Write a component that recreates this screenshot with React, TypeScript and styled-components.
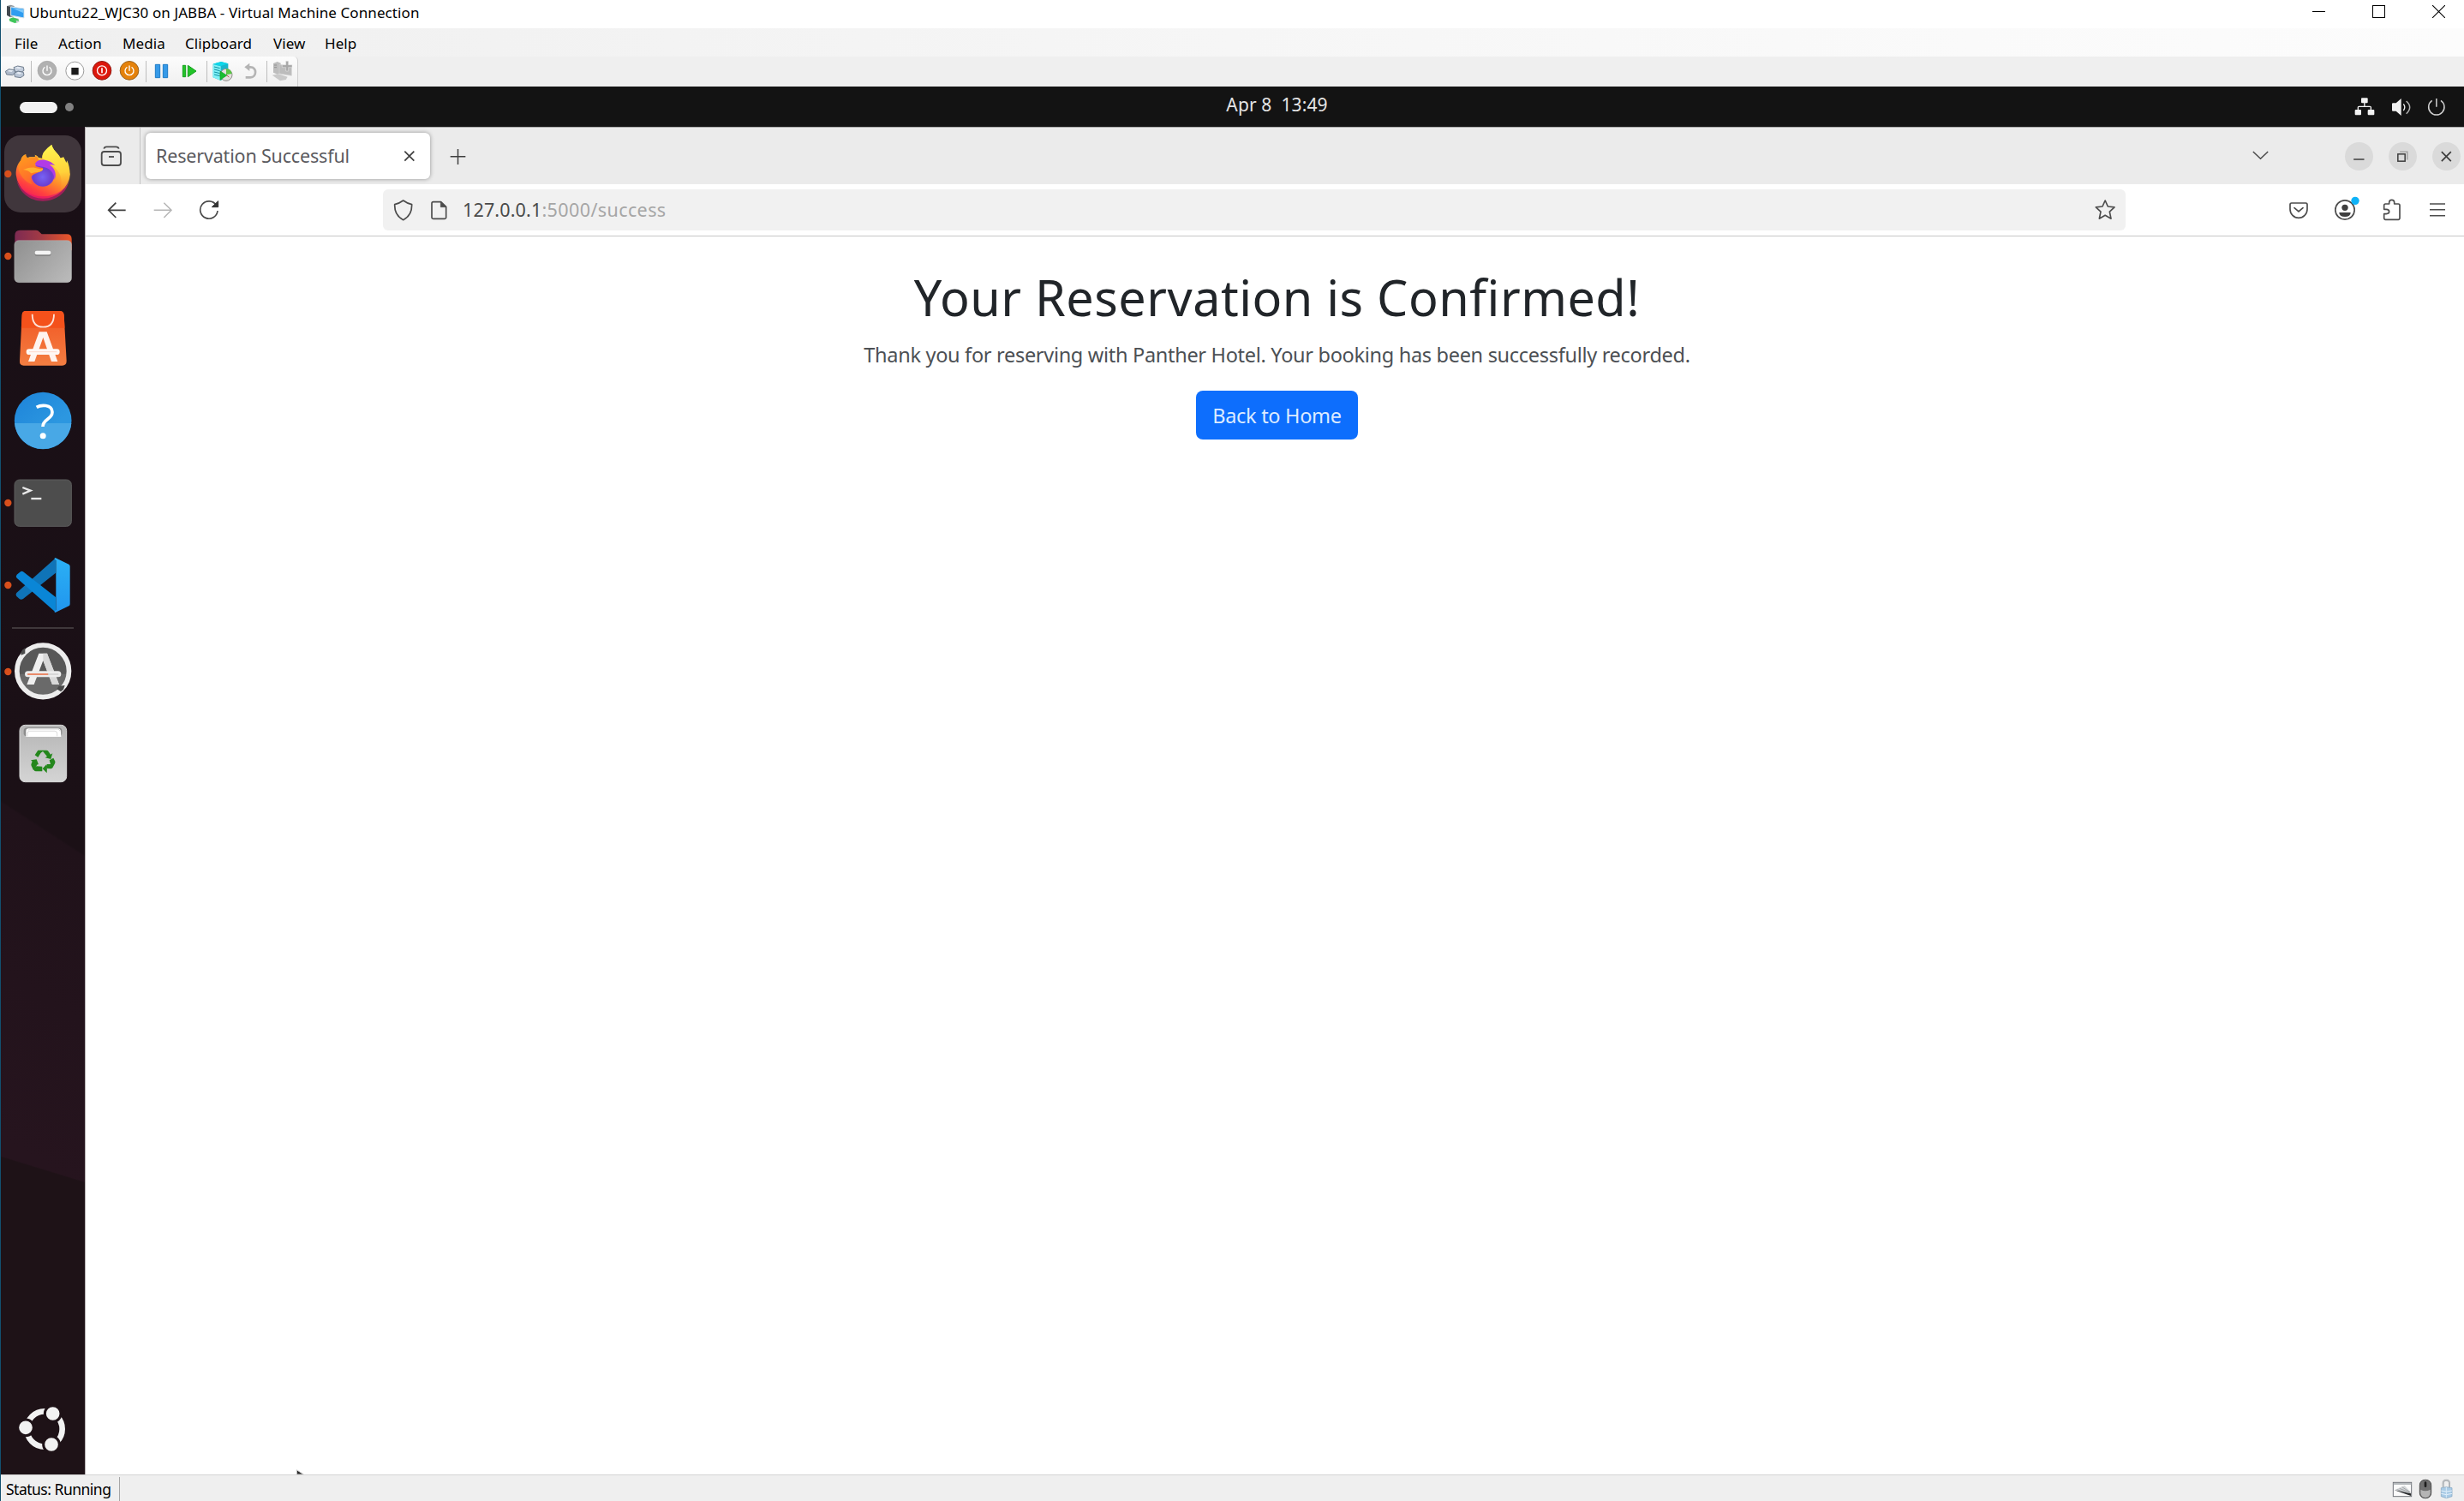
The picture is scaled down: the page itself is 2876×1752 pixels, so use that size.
import React from "react";
import styled, { createGlobalStyle } from "styled-components";

const GlobalStyle = createGlobalStyle`
  *, *::before, *::after { box-sizing: border-box; }
  html, body { margin: 0; padding: 0; background: #fff; }
  body { font-family: "Noto Sans", "Open Sans", sans-serif; overflow: hidden; }
  svg { display: block; flex: none; }
`;

/* ---------- text ---------- */
const Text = styled.span<{ $size: number; $spacing?: number; $color?: string }>`
  font-size: ${(p) => p.$size}px;
  letter-spacing: ${(p) => p.$spacing ?? 0}px;
  color: ${(p) => p.$color ?? "#000"};
  white-space: pre;
`;

/* ---------- host window ---------- */
const HostWindow = styled.div`
  width: 2876px;
  height: 1752px;
  display: flex;
  flex-direction: column;
  background: #fff;
  border-left: 1px solid #12506f;
  overflow: hidden;
`;

const TitleBar = styled.header`
  height: 33px;
  flex: none;
  display: flex;
  align-items: center;
  padding: 0 22px 0 5px;
`;

const TitleText = styled.div`
  flex: 1;
  padding: 0 0 5px 4px;
`;

const WindowControls = styled.div`
  display: flex;
  gap: 55px;
  padding-bottom: 6px;
`;

const MenuBar = styled.nav`
  height: 33px;
  flex: none;
  display: flex;
  align-items: center;
  padding: 2px 0 0 16px;
  background: linear-gradient(90deg, #efefef 0%, #f2f2f2 20%, #fafafa 80%, #fcfcfc 100%);
`;

const MenuItem = styled.div<{ $width: number }>`
  width: ${(p) => p.$width}px;
`;

const ToolStrip = styled.div`
  height: 35px;
  flex: none;
  display: flex;
  background: #efefef;
`;

const ToolGroup = styled.div`
  display: flex;
  align-items: center;
  width: 347px;
  border-radius: 0 5px 0 0;
  background: linear-gradient(180deg, #fcfcfc, #f1f1f1 90%);
  border-right: 1px solid #cfcfcf;
`;

const ToolDivider = styled.div`
  width: 1px;
  height: 25px;
  margin: 0 2px 0 3.5px;
  background: #bdbdbd;
`;

const StatusBar = styled.footer`
  height: 31px;
  flex: none;
  display: flex;
  align-items: stretch;
  border-top: 1px solid #d4d4d4;
  background: #efefef;
`;

const StatusCell = styled.div`
  width: 139px;
  margin-top: 2px;
  padding-left: 6px;
  line-height: 29px;
  border-right: 1px solid #a6a6a6;
`;

const StatusIcons = styled.div`
  display: flex;
  margin-left: auto;
  padding-right: 8px;
`;

/* ---------- guest desktop ---------- */
const Desktop = styled.main`
  flex: 1;
  min-height: 0;
  display: flex;
  flex-direction: column;
  position: relative;
`;

const TopBar = styled.div`
  height: 47px;
  flex: none;
  display: grid;
  grid-template-columns: 104px 1fr auto 1fr;
  align-items: center;
  background: #131313;
`;

const Workspaces = styled.div`
  display: flex;
  align-items: center;
  gap: 9px;
  padding: 1px 0 0 22px;
`;

const ActiveWorkspace = styled.div`
  width: 44px;
  height: 13px;
  border-radius: 7px;
  background: #f2f2f2;
`;

const IdleWorkspace = styled.div`
  width: 10px;
  height: 10px;
  border-radius: 50%;
  background: #818181;
`;

const Clock = styled.div`
  grid-column: 3;
  padding-bottom: 5px;
`;

const SystemTray = styled.div`
  display: flex;
  justify-content: flex-end;
  padding-right: 10.7px;
`;

const Workspace = styled.div`
  flex: 1;
  min-height: 0;
  display: flex;
`;

const Dock = styled.aside`
  width: 98px;
  flex: none;
  display: flex;
  flex-direction: column;
  gap: 6px;
  padding: 10px 0 8px 4px;
  background:
    linear-gradient(197deg, transparent 0 76.8%, #1e1217 76.9% 100%),
    linear-gradient(213deg, #190f16 0, #1b1016 51.9%, #20121a 52.1%, #26141e 76%);
`;

const DockItem = styled.div<{ $active?: boolean; $push?: boolean }>`
  width: 90px;
  height: 90px;
  flex: none;
  margin-top: ${(p) => (p.$push ? "auto" : "0")};
  border-radius: 19px;
  background: ${(p) => (p.$active ? "#40363c" : "transparent")};
`;

const DockDivider = styled.div`
  width: 72px;
  height: 2px;
  margin: -2px 0 -1px 9px;
  flex: none;
  background: #3f383b;
`;

/* ---------- browser ---------- */
const Browser = styled.section`
  flex: 1;
  min-width: 0;
  display: flex;
  flex-direction: column;
  background: #fff;
  border-left: 1px solid #b5b0b2;
`;

const TabBar = styled.div`
  height: 67px;
  flex: none;
  display: flex;
  align-items: center;
  background: #ebebeb;
  border-top: 1px solid #a9a9a9;
`;

const TabOverview = styled.div`
  display: flex;
  border-right: 1px solid #c4c4c4;
`;

const Tab = styled.div`
  width: 332px;
  height: 54px;
  margin-left: 6px;
  display: flex;
  align-items: center;
  justify-content: space-between;
  padding: 0 14px 0 12px;
  border-radius: 6px;
  background: #fff;
  box-shadow: 0 0 5px rgba(0, 0, 0, 0.38);
`;

const TabTitle = styled.div`
  padding-bottom: 2px;
`;

const NewTab = styled.div`
  margin-left: 16px;
`;

const FrameControls = styled.div`
  display: flex;
  align-items: center;
  gap: 18px;
  margin-left: auto;
  padding-right: 4px;
`;

const ChevronSlot = styled.div`
  margin-right: 64px;
`;

const RoundButton = styled.div`
  width: 33px;
  height: 33px;
  border-radius: 50%;
  background: #dadada;
`;

const NavBar = styled.div`
  height: 61px;
  flex: none;
  display: flex;
  align-items: center;
  padding-left: 9px;
  padding-right: 4px;
  border-bottom: 1px solid #c6c6c6;
`;

const AddressBar = styled.div`
  width: 2034px;
  height: 48px;
  margin-left: 176px;
  display: flex;
  align-items: center;
  border-radius: 6px;
  background: #f1f1f1;
`;

const Address = styled.div`
  flex: 1;
  padding: 0 0 1px 6px;
`;

const NavActions = styled.div`
  display: flex;
  margin-left: auto;
`;

const Page = styled.article`
  flex: 1;
  display: flex;
  flex-direction: column;
  align-items: center;
  padding: 35px 0 0 5px;
`;

const Heading = styled.h1`
  margin: 0;
  font-size: 57.5px;
  font-weight: 400;
  letter-spacing: 0.5px;
  line-height: 72px;
  color: #212529;
`;

const Message = styled.p`
  margin: 13px 0 0;
  font-size: 23.5px;
  letter-spacing: -0.3px;
  line-height: 36px;
  color: #4c5054;
`;

const HomeButton = styled.a`
  display: flex;
  align-items: center;
  justify-content: center;
  width: 189px;
  height: 57px;
  margin-top: 24px;
  border-radius: 8px;
  background: #0d6efd;
`;

const Pointer = styled.svg`
  position: absolute;
  left: 342px;
  bottom: 0;
`;

/* ---------- drawings ---------- */
type IconProps = { w: number; h: number; vb: string; children: React.ReactNode };
const Icon = ({ w, h, vb, children }: IconProps) => (
  <svg width={w} height={h} viewBox={vb} fill="none">
    {children}
  </svg>
);

const ToolIcon = ({ x, w = 32, children }: { x: number; w?: number; children: React.ReactNode }) => (
  <Icon w={w} h={35} vb={`${x} 198 ${w * 3} 105`}>{children}</Icon>
);

const DockIcon = ({ y, dot, children }: { y: number; dot?: boolean; children: React.ReactNode }) => (
  <Icon w={90} h={90} vb={`16 ${y} 270 270`}>
    {dot && <circle cx="29" cy={y + 135} r="12.5" fill="#d84f1c" />}
    {children}
  </Icon>
);

const AppLogo = () => (
  <Icon w={24} h={24} vb="19 6 72 72">
    <path d="M25 12l14-4 12 4v36l-12 4-14-8z" fill="#8f959b" />
    <path d="M25 12l12 3v36l-12-7z" fill="#43494f" />
    <path d="M39 15l46 6v33l-46-9z" fill="#2f9df0" stroke="#dfe6ea" strokeWidth="3" />
    <path d="M42 19l40 5v12z" fill="#7cc8fb" />
    <path d="M52 53l14 3v7l-14-2z" fill="#aeb5ba" />
    <path d="M33 57l14-5 20 8-2 8-12 4-18-7z" fill="#3fc65a" />
    <path d="M57 62l14 3-12 7z" fill="#c9ced2" />
  </Icon>
);

const Hexes = () => (
  <ToolIcon x={3} w={31}>
    <g stroke="#5f6d7e" strokeWidth="2.5" strokeLinejoin="round">
      <path d="M48 236l14-5 20 4 2 12-10 6-22-2z" fill="#c3cddb" />
      <path d="M19 250l12-8 20 3 3 10-10 8-21-2z" fill="#aebaca" />
      <path d="M50 256l13-7 19 4 2 11-12 8-20-3z" fill="#b9c5d5" />
    </g>
    <path d="M52 237l10-3 14 3-8 4z M26 249l7-4 14 2-7 5z M56 256l8-4 13 3-8 5z" fill="#e7edf5" />
  </ToolIcon>
);

const PowerGlyph = ({ cx }: { cx: number }) => (
  <g stroke="#fff" strokeWidth="4" strokeLinecap="round">
    <path d={`M${cx - 9} ${236}a15 15 0 1 0 18 0`} />
    <path d={`M${cx} 231v16`} />
  </g>
);

const Firefox = () => (
  <DockIcon y={54} dot>
    <defs>
      <linearGradient id="ffBody" x1="200" y1="110" x2="110" y2="284" gradientUnits="userSpaceOnUse">
        <stop offset="0" stopColor="#fff04a" />
        <stop offset=".28" stopColor="#ffc233" />
        <stop offset=".52" stopColor="#ff8a2a" />
        <stop offset=".78" stopColor="#ff4040" />
        <stop offset="1" stopColor="#f0155f" />
      </linearGradient>
      <radialGradient id="ffGlobe" cx="150" cy="200" r="58" gradientUnits="userSpaceOnUse">
        <stop offset="0" stopColor="#7663f5" />
        <stop offset=".55" stopColor="#6b3fd0" />
        <stop offset="1" stopColor="#b833e1" />
      </radialGradient>
      <linearGradient id="ffFlame" x1="185" y1="90" x2="215" y2="250" gradientUnits="userSpaceOnUse">
        <stop offset="0" stopColor="#fff44f" />
        <stop offset=".6" stopColor="#ffd23a" />
        <stop offset="1" stopColor="#ff8f2c" stopOpacity="0" />
      </linearGradient>
      <linearGradient id="ffHead" x1="80" y1="125" x2="120" y2="210" gradientUnits="userSpaceOnUse">
        <stop offset="0" stopColor="#ff9a1f" />
        <stop offset="1" stopColor="#ff6a2b" />
      </linearGradient>
    </defs>
    <path d="M182 87c4 20 22 28 31 47 1-4 9 4 10-4 5 9 8 14 10 20l3-8c6 14 10 32 10 48a95 94 0 0 1-189 2c-1-20 5-38 17-51 1-8 5-15 16-21 0 6 2 10 6 13 8-3 16-5 25-3 4-2 5-5 1-8 7 1 12 6 14 10l13 2c-1-20 14-32 33-47z" fill="url(#ffBody)" />
    <path d="M59 210c12 34 48 58 92 58s80-24 92-54c-10 44-46 70-92 70s-83-30-92-74z" fill="#e3106e" fillOpacity=".6" />
    <path d="M182 87c4 20 22 28 31 47l10-4 23 60c0 32-16 58-40 66 10-20 14-40 6-62-8-24-36-42-63-60-1-20 14-32 33-47z" fill="url(#ffFlame)" />
    <circle cx="151" cy="192" r="41" fill="url(#ffGlobe)" />
    <path d="M118 150c20-16 54-14 76 10-10-4-16-3-20-3 20 12 26 34 18 53-1-30-20-42-40-46-16-2-28-4-34-14z" fill="#b13be6" />
    <path d="M92 120c0 6 2 10 6 13 10-3 18-4 24-2 4-2 5-5 0-8 9 4 14 12 15 18-8 3-14 10-14 19 6 5 16 6 27 8 4 4 0 10-12 15-8 3-10 3-22 10-9 6-9 22-3 33-26-10-44-34-48-58 2-14 6-22 10-28 1-8 7-14 17-20z" fill="url(#ffHead)" />
    <path d="M82 174c12-4 28-10 43-6 8 3 16 4 26 3 1 6-7 11-18 12-12 1-16 2-23 4-8-8-16-12-28-13z" fill="#ffb02e" />
  </DockIcon>
);

const Files = () => (
  <DockIcon y={342} dot>
    <defs>
      <linearGradient id="flBack" x1="54" y1="0" x2="250" y2="0" gradientUnits="userSpaceOnUse">
        <stop offset="0" stopColor="#7d2a52" />
        <stop offset=".45" stopColor="#a23a45" />
        <stop offset="1" stopColor="#e9562a" />
      </linearGradient>
      <linearGradient id="flFront" x1="70" y1="425" x2="230" y2="570" gradientUnits="userSpaceOnUse">
        <stop offset="0" stopColor="#929292" />
        <stop offset="1" stopColor="#b9b9b9" />
      </linearGradient>
    </defs>
    <path d="M53 440v-36q0-18 18-18h56q8 0 12 6l8 8h88q17 0 17 17v40z" fill="url(#flBack)" />
    <rect x="51.500" y="422" width="200" height="147" rx="15" fill="url(#flFront)" stroke="#c6c6c6" strokeOpacity=".6" strokeWidth="2" />
    <rect x="123" y="461" width="56" height="15" rx="6" fill="#7c7c7c" />
    <rect x="123" y="458" width="56" height="14" rx="6" fill="#f4f4f4" />
  </DockIcon>
);

const AppCenter = () => (
  <DockIcon y={30}>
    <defs>
      <linearGradient id="acBag" x1="0" y1="128" x2="0" y2="260" gradientUnits="userSpaceOnUse">
        <stop offset="0" stopColor="#f2622c" />
        <stop offset="1" stopColor="#f37e42" />
      </linearGradient>
    </defs>
    <path d="M78 84q0-15 14-15h118q14 0 15 15l9 160q0 16-15 16H84q-15 0-14-16z" fill="url(#acBag)" />
    <path d="M78 84q0-15 14-15h118q14 0 15 15l2.500 44H75.500z" fill="#f4511b" />
    <path d="M114 80c0 28 12 45 38 45s38-17 38-45" stroke="#fde3d8" strokeWidth="5.500" />
    <path d="M138 142h27l38 104h-22l-29-84-30 84H100z" fill="#fff3ee" />
    <rect x="93" y="202" width="117" height="20" rx="10" fill="#fff8f5" />
    <path d="M103 212h97" stroke="#fbd3c4" strokeWidth="2.500" />
  </DockIcon>
);

const Help = () => (
  <DockIcon y={318}>
    <defs>
      <linearGradient id="hpTop" x1="90" y1="352" x2="190" y2="470" gradientUnits="userSpaceOnUse">
        <stop offset="0" stopColor="#1f86da" />
        <stop offset="1" stopColor="#2c97e0" />
      </linearGradient>
    </defs>
    <circle cx="151.500" cy="453" r="100" fill="url(#hpTop)" />
    <path d="M52 462h199a100 100 0 0 1-199 0z" fill="#48a8e6" />
    <path d="M129 406c14-8 54-12 55 17 0 26-33 24-33 51" stroke="#fff" strokeWidth="11" strokeLinecap="butt" />
    <circle cx="151.500" cy="506" r="10.500" fill="#fff" />
  </DockIcon>
);

const Terminal = () => (
  <DockIcon y={606} dot>
    <rect x="52" y="660" width="199" height="163" rx="17" fill="#4d4d4d" stroke="#5c5c5c" strokeWidth="3" />
    <path d="M80 687l28 11-28 12" stroke="#e9e9e9" strokeWidth="7" />
    <path d="M110 726h36" stroke="#e9e9e9" strokeWidth="7" />
  </DockIcon>
);

const VsCode = () => (
  <DockIcon y={-6} dot>
    <path d="M196 34v52L82 177q-7 5-13 0l-10-9q-5-6 0-12z" fill="#0f74b8" />
    <path d="M196 224v-53L84 83q-7-5-13 0l-11 9q-5 6 0 12z" fill="#0a86d6" />
    <defs>
      <linearGradient id="vsR" x1="0" y1="34" x2="0" y2="224" gradientUnits="userSpaceOnUse">
        <stop offset="0" stopColor="#2bb0f5" />
        <stop offset="1" stopColor="#2196ee" />
      </linearGradient>
    </defs>
    <path d="M196 34l46 22q4 3 4 7v132q0 5-4 7l-46 22q-3 1-5-2l6-6V42l-6-6q2-3 5-2z" fill="url(#vsR)" />
  </DockIcon>
);

const Updater = () => (
  <DockIcon y={297} dot>
    <circle cx="151.500" cy="430" r="86" fill="#585858" />
    <path d="M66 440a86 86 0 0 0 171 0z" fill="#6a6a6a" />
    <circle cx="151.500" cy="430" r="91" stroke="#ededed" strokeWidth="17" />
    <path d="M75 374l14-6v-19l-8 6q-5 5-7 11z" fill="#4b4b4b" />
    <path d="M200 493l7-11 21-2-5 14-9 8z" fill="#4b4b4b" />
    <path d="M137 368h29l42 109h-24l-32-84-32 84H95z" fill="#f0f0f0" />
    <path d="M152 368h14l42 109h-24l-32-84z" fill="#d8d8d8" />
    <rect x="88" y="430" width="127" height="21" rx="10.500" fill="#ececec" />
    <path d="M99 441h70" stroke="#e8693f" strokeWidth="5" strokeLinecap="round" />
    <path d="M171 441h33" stroke="#cfcfcf" strokeWidth="5" strokeLinecap="round" />
  </DockIcon>
);

const Trash = () => (
  <DockIcon y={585}>
    <defs>
      <linearGradient id="trBody" x1="0" y1="618" x2="0" y2="818" gradientUnits="userSpaceOnUse">
        <stop offset="0" stopColor="#b5b5b5" />
        <stop offset="1" stopColor="#d4d4d4" />
      </linearGradient>
    </defs>
    <rect x="70" y="619" width="164" height="199" rx="19" fill="url(#trBody)" stroke="#dadada" strokeWidth="3" />
    <path d="M84 650v-10q0-12 12-12h110q12 0 12 12v10q-2 8-10 8H94q-8 0-10-8z" fill="#8c8c8c" />
    <path d="M92 660v-20q0-9 9-9h102q9 0 11 9l1 20z" fill="#fff" />
    <path d="M97 658v-10q0-8 8-8h88q8 0 8 8v10 M100 638l4-5h102l6 8" stroke="#c9c9c9" strokeWidth="2" />
    <g fill="#24871c">
      <path d="M123 724l11-17h22l-12 9-10 16z M148 707h16q5 0 8 6l6 9 7-4-6 20-20-5 7-4z" />
      <path d="M174 742l14-8 6 12q1 4-1 8l-8 15-5 3-14-1v-15h12z M166 763l-1 24-15-15 14-16z" />
      <path d="M149 764v17h-22q-5 0-7-4l-3-6h4l8-8z M132 757l-14 20-7-15q-2-3 0-8l3-8-5-4 20-3 7 18z" />
    </g>
  </DockIcon>
);

const UbuntuLogo = () => (
  <DockIcon y={69}>
    <circle cx="157" cy="204" r="62" stroke="#f2f2f2" strokeWidth="20" />
    <g fill="#f2f2f2" stroke="#1e1217" strokeWidth="9">
      <circle cx="91" cy="199" r="28" />
      <circle cx="186" cy="150" r="28" />
      <circle cx="181" cy="258" r="28" />
    </g>
  </DockIcon>
);

const ink = "#4c4c4c";

const menus = [
  { label: "File", width: 51 },
  { label: "Action", width: 75 },
  { label: "Media", width: 73 },
  { label: "Clipboard", width: 103 },
  { label: "View", width: 60 },
  { label: "Help", width: 50 },
];

export default function App() {
  return (
    <>
      <GlobalStyle />
      <HostWindow>
        <TitleBar>
          <AppLogo />
          <TitleText>
            <Text $size={17} $spacing={0.09}>Ubuntu22_WJC30 on JABBA - Virtual Machine Connection</Text>
          </TitleText>
          <WindowControls>
            <Icon w={15} h={15} vb="0 0 15 15"><path d="M0 7.500h15" stroke="#000" /></Icon>
            <Icon w={15} h={15} vb="0 0 15 15"><rect x=".5" y=".5" width="14" height="14" stroke="#000" /></Icon>
            <Icon w={15} h={15} vb="0 0 15 15"><path d="M0 0l15 15M15 0L0 15" stroke="#000" strokeWidth="1.100" /></Icon>
          </WindowControls>
        </TitleBar>

        <MenuBar>
          {menus.map((m) => (
            <MenuItem key={m.label} $width={m.width}>
              <Text $size={17} $spacing={0.07}>{m.label}</Text>
            </MenuItem>
          ))}
        </MenuBar>

        <ToolStrip>
          <ToolGroup>
            <Hexes />
            <ToolDivider />
            <ToolIcon x={115}>
              <circle cx="163" cy="247" r="33" fill="#b1b1b1" stroke="#a3a3a3" strokeWidth="2" />
              <PowerGlyph cx={163} />
            </ToolIcon>
            <ToolIcon x={211}>
              <circle cx="260" cy="248" r="31.500" fill="#fff" stroke="#9b9b9b" strokeWidth="3" />
              <rect x="248" y="237" width="25" height="25" fill="#1c1c1c" />
            </ToolIcon>
            <ToolIcon x={307}>
              <circle cx="355" cy="247" r="32.500" fill="#dc170c" stroke="#8f1c14" strokeWidth="3" />
              <circle cx="355" cy="247" r="16.500" stroke="#fff" strokeWidth="4" />
              <path d="M355 238v18" stroke="#fff" strokeWidth="5" />
            </ToolIcon>
            <ToolIcon x={403}>
              <circle cx="451" cy="247" r="32.500" fill="#e5820b" stroke="#9c6420" strokeWidth="3" />
              <PowerGlyph cx={451} />
            </ToolIcon>
            <ToolDivider />
            <ToolIcon x={519}>
              <path d="M544 226h16v46h-16zM571 226h16v46h-16z" fill="#359ae8" stroke="#1e7bc6" strokeWidth="3" />
            </ToolIcon>
            <ToolIcon x={615}>
              <path d="M640 229h10v40h-10zM658 229l29 20-29 20z" fill="#21c428" stroke="#16a01f" strokeWidth="3" />
            </ToolIcon>
            <ToolDivider />
            <ToolIcon x={730}>
              <path d="M744 224l28-8 25 7v42l-26 17-27-11z" fill="#19b7cc" />
              <path d="M744 224l28-8 25 7-26 8z" fill="#0dd7ea" />
              <path d="M744 225l27 7v50l-27-11z" fill="#7ff0f6" />
              <path d="M748 234l20 5M748 243l20 5M748 252l20 5M748 261l20 5" stroke="#0f8fa2" strokeWidth="3" />
              <circle cx="790" cy="262" r="21" fill="#e3e0de" stroke="#8f8c8a" strokeWidth="3" />
              <path d="M790 262v-21a21 21 0 0 1 20 17z" fill="#58c742" />
              <path d="M790 262l10 8" stroke="#a33" strokeWidth="2.500" />
              <path d="M769 249l23 15-23 16z" fill="#18bf30" stroke="#0f9a25" strokeWidth="2" />
            </ToolIcon>
            <ToolIcon x={826}>
              <path d="M866 235h9c23 0 23 36 0 36h-17" stroke="#b4b4b4" strokeWidth="8" />
              <path d="M854 235l18-14v28z" fill="#b4b4b4" />
            </ToolIcon>
            <ToolDivider />
            <ToolIcon x={942}>
              <path d="M957 222l14-6 12 5v34l-12 5-14-6z" fill="#bdbdbd" />
              <path d="M960 228h9M960 236h9" stroke="#909090" strokeWidth="3" />
              <path d="M978 226l43 7v32l-43-7z" fill="#bcbcbc" stroke="#d2d2d2" strokeWidth="2" />
              <path d="M953 263l22-4 32 10-6 10-20 4z" fill="#c9c9c9" />
              <path d="M1001 214h9v13h13v9h-13v13h-9v-13h-13v-9h13z" fill="#a8a8a8" stroke="#ececec" strokeWidth="1.500" />
            </ToolIcon>
          </ToolGroup>
        </ToolStrip>

        <Desktop>
          <TopBar>
            <Workspaces>
              <ActiveWorkspace />
              <IdleWorkspace />
            </Workspaces>
            <Clock><Text $size={21} $spacing={0.1} $color="#e4e4e4">{"Apr 8  13:49"}</Text></Clock>
            <SystemTray>
              <Icon w={42} h={47} vb="1018 303 126 141">
                <g fill="#f2f2f2">
                  <rect x="1069" y="343" width="23" height="18" rx="3" />
                  <rect x="1047" y="384" width="22" height="19" rx="3" />
                  <rect x="1092" y="384" width="23" height="19" rx="3" />
                </g>
                <path d="M1080.500 360v13M1058 386v-10q0-3 3-3h39q3 0 3 3v10" stroke="#f2f2f2" strokeWidth="4" />
              </Icon>
              <Icon w={42} h={47} vb="1144 303 126 141">
                <path d="M1180 361h11l18-16v60l-18-16h-11q-3 0-3-3v-22q0-3 3-3z" fill="#f2f2f2" />
                <path d="M1217 364q9 11 0 23" stroke="#f2f2f2" strokeWidth="4" />
                <path d="M1227 354q24 21 0 44" stroke="#b5b5b5" strokeWidth="4.500" />
              </Icon>
              <Icon w={42} h={47} vb="1270 303 126 141">
                <path d="M1317 352a27.500 27.500 0 1 0 31 0" stroke="#cfcfcf" strokeWidth="4.500" />
                <path d="M1332.500 345v29" stroke="#cfcfcf" strokeWidth="4.500" />
              </Icon>
            </SystemTray>
          </TopBar>

          <Workspace>
            <Dock>
              <DockItem $active><Firefox /></DockItem>
              <DockItem><Files /></DockItem>
              <DockItem><AppCenter /></DockItem>
              <DockItem><Help /></DockItem>
              <DockItem><Terminal /></DockItem>
              <DockItem><VsCode /></DockItem>
              <DockDivider />
              <DockItem><Updater /></DockItem>
              <DockItem><Trash /></DockItem>
              <DockItem $push><UbuntuLogo /></DockItem>
            </Dock>

            <Browser>
              <TabBar>
                <TabOverview>
                  <Icon w={63} h={66} vb="300 27 189 198">
                    <g stroke={ink} strokeWidth="5.500">
                      <rect x="356" y="111" width="67" height="48" rx="9" />
                      <path d="M364 101q1-7 9-7h33q9 0 10 7" strokeWidth="5" />
                      <path d="M381 129h18" />
                    </g>
                  </Icon>
                </TabOverview>
                <Tab>
                  <TabTitle>
                    <Text $size={21.5} $spacing={-0.17} $color="#5b5b5f">Reservation Successful</Text>
                  </TabTitle>
                  <Icon w={20} h={20} vb="1404 96 60 60">
                    <path d="M1417 110l33 33M1450 110l-33 33" stroke="#3f3f3f" strokeWidth="5" />
                  </Icon>
                </Tab>
                <NewTab>
                  <Icon w={33} h={66} vb="234 27 99 198">
                    <path d="M257 128h53M283.500 102v54" stroke="#3f3f3f" strokeWidth="4.500" />
                  </Icon>
                </NewTab>
                <FrameControls>
                  <ChevronSlot>
                    <Icon w={33} h={66} vb="664.500 447 99 198">
                      <path d="M688 531l26 25 26-25" stroke="#4a4a4a" strokeWidth="4.500" />
                    </Icon>
                  </ChevronSlot>
                  <RoundButton>
                    <Icon w={33} h={33} vb="1011.500 496.500 99 99"><path d="M1042 556.500h37" stroke="#3d3d3d" strokeWidth="4.500" /></Icon>
                  </RoundButton>
                  <RoundButton>
                    <Icon w={33} h={33} vb="1164.500 496.500 99 99">
                      <rect x="1197" y="538" width="25" height="25" stroke="#3d3d3d" strokeWidth="4.500" />
                      <path d="M1204 530h26v28" stroke="#9a9a9a" strokeWidth="4" />
                    </Icon>
                  </RoundButton>
                  <RoundButton>
                    <Icon w={33} h={33} vb="1317.500 496.500 99 99"><path d="M1350 530l33 33M1383 530l-33 33" stroke="#3d3d3d" strokeWidth="5" /></Icon>
                  </RoundButton>
                </FrameControls>
              </TabBar>

              <NavBar>
                <Icon w={54} h={60} vb="327 225 162 180">
                  <path d="M440 316h-60M406 290l-26 26 26 26" stroke="#3f3f3f" strokeWidth="5" />
                </Icon>
                <Icon w={54} h={60} vb="489 225 162 180">
                  <path d="M539 316h60M574 290l26 26-26 26" stroke="#b5b5b5" strokeWidth="4.500" />
                </Icon>
                <Icon w={54} h={60} vb="651 225 162 180">
                  <path d="M757 298a30.500 30.500 0 1 0 5 20" stroke="#4a4a4a" strokeWidth="5" />
                  <path d="M764 284v21h-22z" fill="#333" stroke="#333" strokeWidth="3" />
                </Icon>
                <AddressBar>
                  <Icon w={45} h={48} vb="21 242 135 144">
                    <path d="M92 281q15 11 30 14 1 38-30 54-31-16-30-54 15-3 30-14z" stroke={ink} strokeWidth="5" strokeLinejoin="round" />
                  </Icon>
                  <Icon w={42} h={48} vb="156 242 126 144">
                    <path d="M224 286h-27q-5 0-5 5v49q0 5 5 5h40q5 0 5-5v-37z" stroke={ink} strokeWidth="5" strokeLinejoin="round" />
                    <path d="M223 286v18h19z" fill={ink} stroke={ink} strokeWidth="2" />
                  </Icon>
                  <Address>
                    <Text $size={21.5} $spacing={0.15} $color="#4a4a4a">127.0.0.1</Text>
                    <Text $size={21.5} $spacing={0.4} $color="#a6a6a6">:5000/success</Text>
                  </Address>
                  <Icon w={48} h={48} vb="97 664 144 144">
                    <path d="M169.500 703l9.500 21 23 2.500-17 16 5 24-20.500-11.500-20.500 11.500 5-24-17-16 23-2.500z" stroke={ink} strokeWidth="5" strokeLinejoin="round" />
                  </Icon>
                </AddressBar>
                <NavActions>
                  <Icon w={54} h={60} vb="768 645 162 180">
                    <path d="M824 711h50q5 0 5 5v17a30 30 0 0 1-60 0v-17q0-5 5-5z" stroke={ink} strokeWidth="5" />
                    <path d="M834 728l15 13 15-13" stroke={ink} strokeWidth="5" strokeLinecap="round" />
                  </Icon>
                  <Icon w={54} h={60} vb="930 645 162 180">
                    <circle cx="1011" cy="735" r="33.500" stroke={ink} strokeWidth="5" />
                    <circle cx="1011" cy="727" r="11" fill="#3f3f3f" />
                    <path d="M991 744h40q0 15-20 15t-20-15z" fill="#3f3f3f" />
                    <circle cx="1047" cy="703" r="14" fill="#0eb2f7" />
                  </Icon>
                  <Icon w={54} h={60} vb="1092 645 162 180">
                    <path d="M1148 719q0-5 5-5h13v-5q0-9 9-9t9 9v5h14q5 0 5 5v44q0 6-5 6h-45q-5 0-5-6v-14h8q10-1 10-8t-10-8h-8z" stroke={ink} strokeWidth="5" strokeLinejoin="round" />
                  </Icon>
                  <Icon w={54} h={60} vb="1254 645 162 180">
                    <path d="M1308 714h54M1308 734h54M1308 755h54" stroke={ink} strokeWidth="4.500" />
                  </Icon>
                </NavActions>
              </NavBar>

              <Page>
                <Heading>Your Reservation is Confirmed!</Heading>
                <Message>Thank you for reserving with Panther Hotel. Your booking has been successfully recorded.</Message>
                <HomeButton><Text $size={23.5} $spacing={-0.3} $color="#dcebff">Back to Home</Text></HomeButton>
              </Page>
            </Browser>
          </Workspace>
          <Pointer width="14" height="7" viewBox="1026 342 42 21">
            <path d="M1036 347v16h24z" fill="#2a2a2a" stroke="#cfcfcf" strokeWidth="3" />
          </Pointer>
        </Desktop>

        <StatusBar>
          <StatusCell><Text $size={17.5} $spacing={-0.5}>Status: Running</Text></StatusCell>
          <StatusIcons>
            <Icon w={28} h={30} vb="96 66 84 90">
              <rect x="100" y="91" width="64" height="49" fill="#fbfbfb" stroke="#70747a" strokeWidth="3" />
              <path d="M101 96h62" stroke="#a8acb0" strokeWidth="5" />
              <path d="M104 118l36-16 22 24v9z" fill="#d5d8da" />
              <path d="M104 118l58 12v8z" fill="#26282a" />
              <path d="M113 116l40 12M122 112l36 14M131 107l28 18" stroke="#8a8d90" strokeWidth="2" />
            </Icon>
            <Icon w={24} h={30} vb="180 66 72 90">
              <rect x="193" y="82" width="40" height="64" rx="18" fill="#6f6f6f" stroke="#4a4a4a" strokeWidth="3" />
              <path d="M196 116q17 10 34 0v14q-3 14-17 14t-17-14z" fill="#b5b5b5" />
              <rect x="209" y="88" width="8" height="20" rx="4" fill="#1d1d1d" />
            </Icon>
            <Icon w={24} h={30} vb="252 66 72 90">
              <path d="M275 108V94q0-11 11-11t11 11v16" stroke="#9a9fa3" strokeWidth="6" />
              <path d="M275 108V94q0-11 11-11t11 11v16" stroke="#dfe3e6" strokeWidth="2" />
              <path d="M268 110l18-3 20 3v30l-20 6-18-6z" fill="#a9cbe6" stroke="#7fa3bf" strokeWidth="2" />
              <path d="M268 120l18 3 20-3M268 130l18 4 20-4" stroke="#e6f2fb" strokeWidth="3" />
              <path d="M286 108v37" stroke="#d9ecf9" strokeWidth="3" />
            </Icon>
          </StatusIcons>
        </StatusBar>
      </HostWindow>
    </>
  );
}
